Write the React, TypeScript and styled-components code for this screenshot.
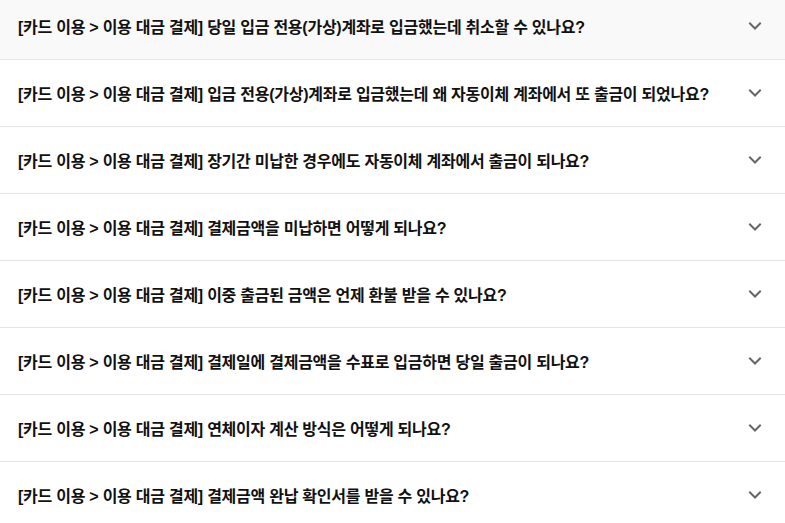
import React from 'react'
import styled, { createGlobalStyle } from 'styled-components'

const GlobalStyle = createGlobalStyle`
  html, body {
    margin: 0;
    padding: 0;
    background: #ffffff;
    overflow: hidden;
  }
  body {
    font-family: 'Liberation Sans', 'Noto Sans CJK KR', sans-serif;
  }
`

const questions = [
  '당일 입금 전용(가상)계좌로 입금했는데 취소할 수 있나요?',
  '입금 전용(가상)계좌로 입금했는데 왜 자동이체 계좌에서 또 출금이 되었나요?',
  '장기간 미납한 경우에도 자동이체 계좌에서 출금이 되나요?',
  '결제금액을 미납하면 어떻게 되나요?',
  '이중 출금된 금액은 언제 환불 받을 수 있나요?',
  '결제일에 결제금액을 수표로 입금하면 당일 출금이 되나요?',
  '연체이자 계산 방식은 어떻게 되나요?',
  '결제금액 완납 확인서를 받을 수 있나요?',
]

const Chevron = () => (
  <svg width="14" height="14" viewBox="0 0 14 14" fill="none">
    <path d="M2 4.5 L7 9.5 L12 4.5" stroke="#666666" strokeWidth="2" strokeLinecap="square" />
  </svg>
)

const FaqList = () => {
  return (
    <ListWrapper>
      {questions.map((q, i) => (
        <Row key={q} active={i === 0}>
          <Title>
            [카드 이용 &gt; 이용 대금 결제] {q}
          </Title>
          <Toggle>
            <Chevron />
          </Toggle>
        </Row>
      ))}
    </ListWrapper>
  )
}

const ListWrapper = styled.ul`
  list-style: none;
  margin: -7px 0 0;
  padding: 0;
  width: 785px;
`

const Row = styled.li.withConfig({ shouldForwardProp: p => p !== 'active' })<{ active?: boolean }>`
  display: flex;
  align-items: center;
  justify-content: space-between;
  height: 66px;
  padding: 0 18px;
  background: ${({ active }) => (active ? '#f9f9f9' : '#ffffff')};
  border-bottom: 1px solid #e5e5e5;
`

const Title = styled.p`
  margin: 0;
  font-size: 16px;
  font-weight: 700;
  color: #111111;
  letter-spacing: -0.25px;
  white-space: nowrap;
`

const Toggle = styled.span`
  display: flex;
  width: 14px;
  height: 14px;
  margin-right: 5px;
`

const App = () => (
  <>
    <GlobalStyle />
    <FaqList />
  </>
)

export default App
